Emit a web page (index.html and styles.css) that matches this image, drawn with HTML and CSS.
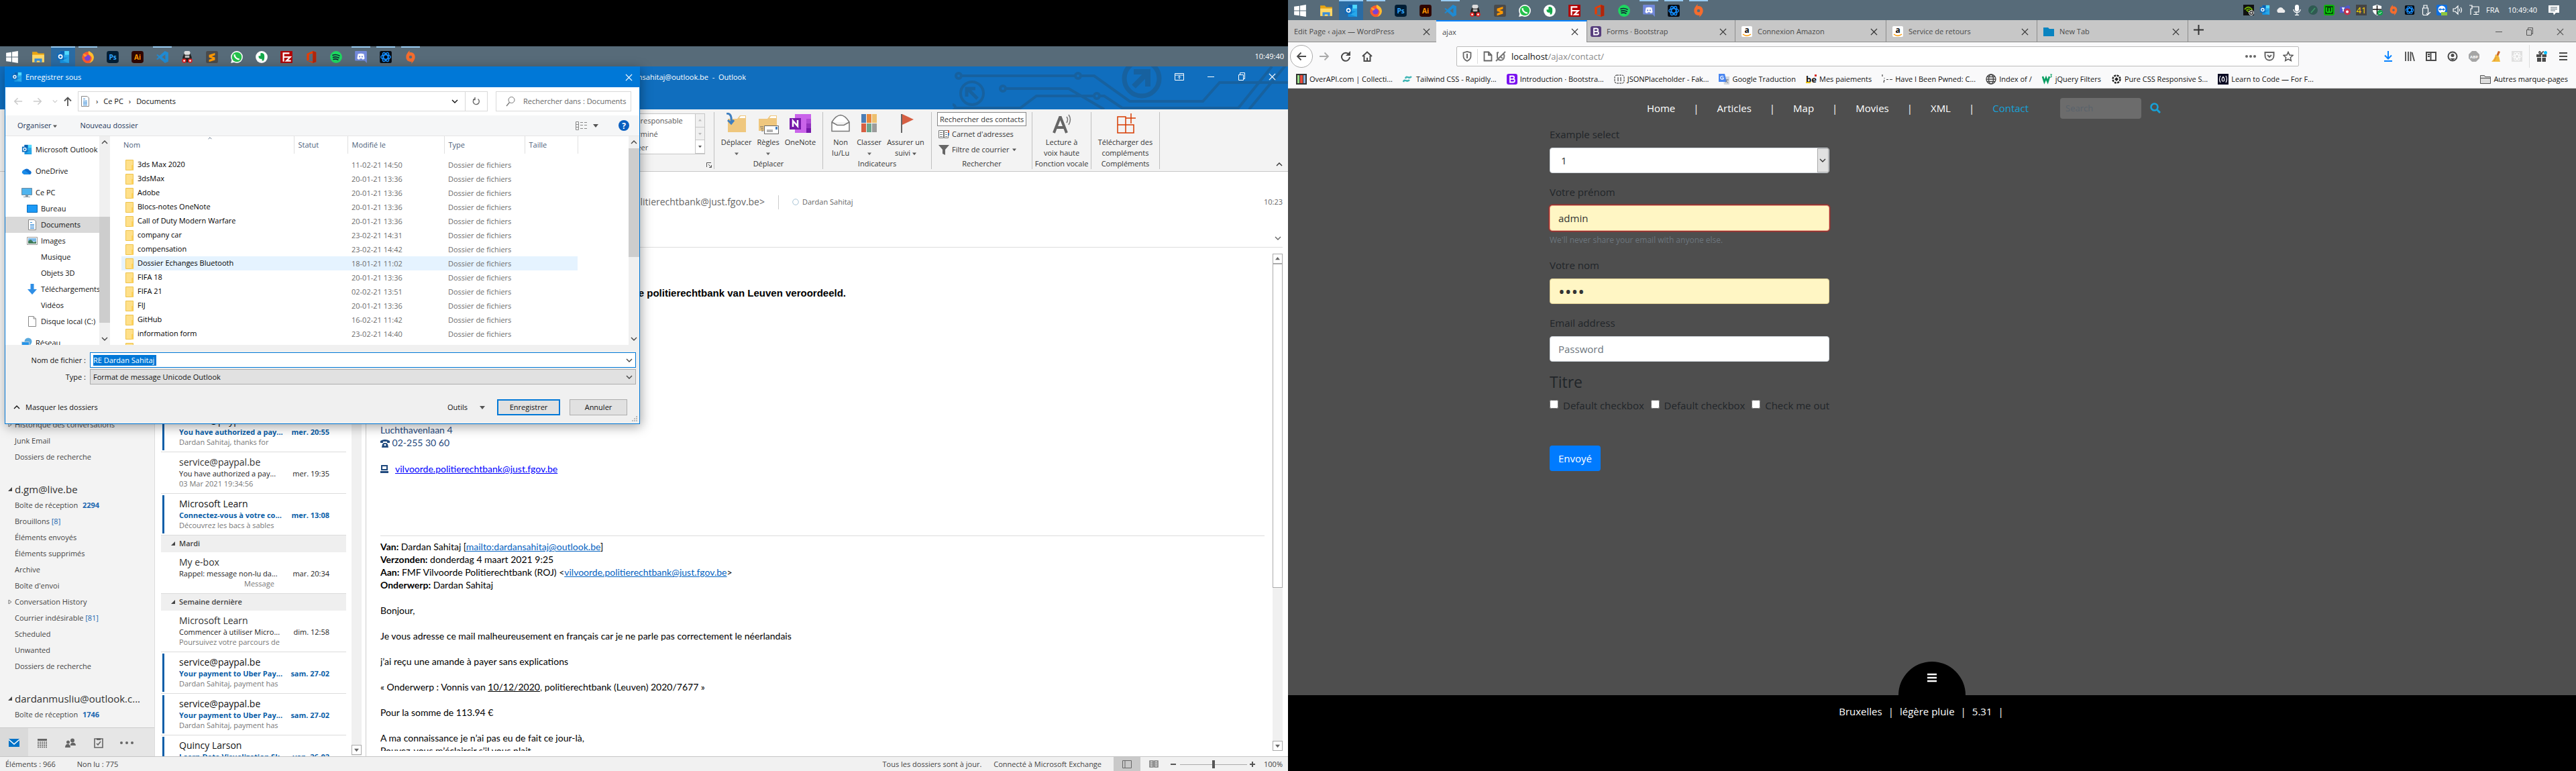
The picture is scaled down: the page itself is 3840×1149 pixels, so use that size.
FILE: index.html
```
<!DOCTYPE html>
<html lang="fr">
<head>
<meta charset="utf-8">
<title>Bureau</title>
<link rel="stylesheet" href="styles.css">
</head>
<body>
<svg class="sprite" aria-hidden="true">
  <defs>
    <symbol id="i-win" viewBox="0 0 18 18"><path fill="#fff" d="M1 3.400 8 2.400V8.500H1zM9 2.200 17 1V8.500H9zM1 9.500H8V15.600L1 14.600zM9 9.500H17V17L9 15.800z"/></symbol>
    <symbol id="i-explorer" viewBox="0 0 18 18"><path fill="#e9a512" d="M1 2h6l2 2h8v12H1z"/><path fill="#ffd868" d="M1 6h16v10H1z"/><path fill="#3b8ed8" d="M4 16v-5h10v5h-3v-2H7v2z"/></symbol>
    <symbol id="i-outlook" viewBox="0 0 18 18"><path fill="#28a8ea" d="M5 1h12v9H5z"/><path fill="#0a5eb0" d="M5 1h6v5H5z"/><path fill="#50d9ff" d="M11 1h6v5h-6z"/><path fill="#1490df" d="M5 9l12 1v7H5z"/><path fill="#28a8ea" d="M17 9v8L8 14z"/><path fill="#0f6cbd" d="M1 4h9v9H1z"/><circle cx="5.500" cy="8.500" r="2.300" fill="none" stroke="#fff" stroke-width="1.500"/></symbol>
    <symbol id="i-firefox" viewBox="0 0 18 18"><circle cx="9" cy="9.500" r="7.800" fill="#ff5a2c"/><path fill="#ffbd2e" d="M10 1c4 2 7 4 7 9a8 8 0 0 1-6 7c4-4 4-8 1-10-2-1-3-3-2-6z"/><circle cx="8.500" cy="10" r="4" fill="#7a43d6"/><path fill="#ff9a2b" d="M2 5c2 0 4 0 6 2L5 9z"/></symbol>
    <symbol id="i-ps" viewBox="0 0 18 18"><rect x="1" y="1" width="16" height="16" rx="3" fill="#001d34"/><text x="9" y="12.500" font-size="9" font-weight="700" text-anchor="middle" fill="#31a8ff">Ps</text></symbol>
    <symbol id="i-ai" viewBox="0 0 18 18"><rect x="1" y="1" width="16" height="16" rx="3" fill="#2e0500"/><text x="9" y="12.500" font-size="9" font-weight="700" text-anchor="middle" fill="#ff9a00">Ai</text></symbol>
    <symbol id="i-code" viewBox="0 0 18 18"><path fill="#1f8ad2" d="M12.500 1 17 3v12l-4.500 2L5 10.500 2.500 12.500 1 11.600 4 9 1 6.400l1.500-.9L5 7.500zM13 5.500 8.500 9 13 12.500z"/></symbol>
    <symbol id="i-robot" viewBox="0 0 18 18"><path fill="#222" d="M5 4h8l2 5v7H3V9z"/><rect x="5" y="1" width="8" height="5" rx="2" fill="#ddd"/><path fill="#bbb" d="M6 7h6v3H6z"/><circle cx="5" cy="14" r="3" fill="#d22"/><circle cx="5" cy="14" r="1.200" fill="#fff"/><circle cx="13" cy="14" r="3" fill="#d22"/><circle cx="13" cy="14" r="1.200" fill="#fff"/></symbol>
    <symbol id="i-sublime" viewBox="0 0 18 18"><rect x="1" y="1" width="16" height="16" rx="2" fill="#4a4a4a"/><path fill="#ff9800" d="M13 3.500v3L8.500 8l4.500 1.500v3.500l-8 2.500v-3L9.500 11 5 9.500V6z"/></symbol>
    <symbol id="i-whatsapp" viewBox="0 0 18 18"><circle cx="9" cy="9" r="8" fill="#fff"/><path fill="#fff" d="M1 17l1.500-5L6 16z"/><circle cx="9" cy="9" r="6.600" fill="#25c04b"/><path fill="none" stroke="#fff" stroke-width="2" d="M6 5.500c-.6 3 2.500 6.600 6.500 6.500"/></symbol>
    <symbol id="i-evernote" viewBox="0 0 18 18"><circle cx="9" cy="9" r="8" fill="#fff"/><path fill="#14a84a" d="M7.500 4c2-.8 4.500 0 5 2 .6 3 .3 6-1 8H9.500v-2.500C7 12 4.500 11 5 7.500h2.500z"/></symbol>
    <symbol id="i-filezilla" viewBox="0 0 18 18"><path fill="#b30000" d="M1 1h16v16H1z"/><path fill="none" stroke="#fff" stroke-width="2" d="M5 15V4h8M5 9h5M9 9h5l-5 5h6"/></symbol>
    <symbol id="i-office" viewBox="0 0 18 18"><path fill="#eb3c00" d="M3 4.500 11 1l4.500 1.500v13L11 17l-8-3 8 1V4L6 5.500V13l-3 1z"/><path fill="#b0260c" d="M11 1l4.500 1.500v13L11 17z"/></symbol>
    <symbol id="i-spotify" viewBox="0 0 18 18"><circle cx="9" cy="9" r="8" fill="#1ed760"/><path fill="none" stroke="#123" stroke-width="1.500" stroke-linecap="round" d="M4.500 6.500c3-1 6.500-.6 9 .8M5 9.300c2.700-.8 5.600-.4 7.700.8M5.500 12c2.200-.6 4.400-.3 6 .6"/></symbol>
    <symbol id="i-discord" viewBox="0 0 18 18"><path fill="#7289da" d="M2 1h14a1 1 0 0 1 1 1v15l-3-3H2a1 1 0 0 1-1-1V2a1 1 0 0 1 1-1z"/><path fill="#fff" d="M5 5c3-1 5-1 8 0l1 6-2.500 1.500-1-1.500h-3l-1 1.500L4 11z"/><circle cx="7.300" cy="8.500" r="1" fill="#7289da"/><circle cx="10.700" cy="8.500" r="1" fill="#7289da"/></symbol>
    <symbol id="i-battle" viewBox="0 0 18 18"><rect x="1" y="1" width="16" height="16" rx="2" fill="#050a12"/><g fill="none" stroke="#148eff" stroke-width="1.300"><ellipse cx="9" cy="9" rx="6.500" ry="3"/><ellipse cx="9" cy="9" rx="6.500" ry="3" transform="rotate(60 9 9)"/><ellipse cx="9" cy="9" rx="6.500" ry="3" transform="rotate(120 9 9)"/></g></symbol>
    <symbol id="i-origin" viewBox="0 0 18 18"><path fill="#f56c2d" d="M8 0 7.500 3C12 2 15 5 15 9c0 4-3 7-5 9l.5-3C6 16 3 13 3 9c0-4 3-7 5-9z"/><circle cx="9" cy="9" r="2" fill="#576b79"/></symbol>
    <symbol id="i-x" viewBox="0 0 12 12"><path fill="none" stroke="currentColor" stroke-width="1.400" d="M1 1l10 10M11 1 1 11"/></symbol>
    <symbol id="i-down" viewBox="0 0 10 10"><path fill="none" stroke="currentColor" stroke-width="1.400" d="M1 3l4 4 4-4"/></symbol>
    <symbol id="i-up" viewBox="0 0 10 10"><path fill="none" stroke="currentColor" stroke-width="1.400" d="M1 7l4-4 4 4"/></symbol>
    <symbol id="i-tri" viewBox="0 0 8 8"><path fill="currentColor" d="M0 2h8L4 7z"/></symbol>
    <symbol id="i-triup" viewBox="0 0 8 8"><path fill="currentColor" d="M0 6h8L4 1z"/></symbol>
    <symbol id="i-open" viewBox="0 0 8 8"><path fill="#444" d="M7 1v6H1z"/></symbol>
    <symbol id="i-doc" viewBox="0 0 16 16"><path fill="#fff" stroke="#888" d="M2.500.5H11l2.500 2.500v12.500h-11z"/><path stroke="#3b8ed8" d="M5 4.500h3M5 7.500h6M5 9.500h6M5 11.500h6M5 13.500h6"/></symbol>
    <symbol id="i-folder" viewBox="0 0 16 16"><path fill="#ffe08a" stroke="#eec34a" d="M2.500.5h11v15h-11z"/><path fill="#ffd25c" d="M11 8h2v8h-2z"/></symbol>
    <symbol id="i-cloud" viewBox="0 0 16 16"><path fill="#0f6fd0" d="M4 13a4 4 0 0 1 0-7 5 5 0 0 1 8 1 3.200 3.200 0 0 1 1 6z"/><path fill="#1b8ce8" d="M1 11a4 4 0 0 1 3-5l9 7H4z"/></symbol>
    <symbol id="i-pc" viewBox="0 0 16 16"><path fill="#4fb4ee" stroke="#6e8ba0" d="M.5 1.500h15v10H.5z"/><path fill="#8a98a3" d="M6 12h4v2h3v1H3v-1h3z"/></symbol>
    <symbol id="i-desk" viewBox="0 0 16 16"><path fill="#1b9af7" stroke="#0a6bb8" d="M.5 2.500h15v11H.5z"/></symbol>
    <symbol id="i-image" viewBox="0 0 16 16"><path fill="#fff" stroke="#999" d="M.5 2.500h15v11H.5z"/><path fill="#7db9e8" d="M2 4h12v5H2z"/><path fill="#3f7a5a" d="M2 12V8l4-2 4 4 4-1v3z"/></symbol>
    <symbol id="i-arrow" viewBox="0 0 16 16"><path fill="#2f8fe6" d="M5.500 0h5v8H15l-7 8-7-8h4.500z"/></symbol>
    <symbol id="i-page" viewBox="0 0 16 16"><path fill="#fff" stroke="#888" d="M2.500.5H10l3.500 3.500v11.500h-11z"/><path fill="none" stroke="#888" d="M10 .5V4h3.500"/></symbol>
    <symbol id="i-net" viewBox="0 0 16 16"><circle cx="10" cy="6" r="5.500" fill="#5aa9dd"/><path fill="#2694e8" stroke="#bcd" d="M.5 6.500h11v8H.5z"/></symbol>
    <symbol id="i-glass" viewBox="0 0 16 16"><circle cx="9.500" cy="6" r="4.500" fill="none" stroke="currentColor"/><path stroke="currentColor" stroke-width="1.300" d="M6.500 9.500 2 15"/></symbol>
    <symbol id="i-back" viewBox="0 0 16 16"><path fill="none" stroke="currentColor" stroke-width="1.800" d="M15 8H2M7.500 2.500 2 8l5.500 5.500"/></symbol>
    <symbol id="i-fwd" viewBox="0 0 16 16"><path fill="none" stroke="currentColor" stroke-width="1.800" d="M1 8h13M8.500 2.500 14 8l-5.500 5.500"/></symbol>
    <symbol id="i-reload" viewBox="0 0 16 16"><path fill="none" stroke="currentColor" stroke-width="2" d="M13 5.500A6 6 0 1 0 14 9"/><path fill="currentColor" d="M15 0v7H8z"/></symbol>
    <symbol id="i-min" viewBox="0 0 12 12"><path stroke="currentColor" d="M1 6.500h10"/></symbol>
    <symbol id="i-max" viewBox="0 0 12 12"><path fill="none" stroke="currentColor" d="M1.500 3.500h7v8h-7zM3.500 3V.5h7v9H9"/></symbol>
    <symbol id="i-bs" viewBox="0 0 16 16"><rect width="16" height="16" rx="3" fill="currentColor"/><path fill="none" stroke="#fff" stroke-width="1.800" d="M5 3.500h4a2 2 0 0 1 0 4.300H5zM5 7.800h4.500a2.300 2.300 0 0 1 0 4.700H5z"/></symbol>
    <symbol id="i-amazon" viewBox="0 0 16 16"><rect width="16" height="16" rx="2" fill="#fff"/><text x="8" y="10" font-size="12" font-weight="700" text-anchor="middle" fill="#111">a</text><path fill="none" stroke="#ff9900" stroke-width="1.500" d="M2 12c4 3 8 3 12 0"/></symbol>
  </defs>
</svg>

<div class="desktop">
<section class="screen screen-left">
  <header class="taskbar">
    <svg class="app first"><use href="#i-win"/></svg>
    <svg class="app"><use href="#i-explorer"/></svg>
    <svg class="app running active"><use href="#i-outlook"/></svg>
    <svg class="app running"><use href="#i-firefox"/></svg>
    <svg class="app"><use href="#i-ps"/></svg>
    <svg class="app"><use href="#i-ai"/></svg>
    <svg class="app running"><use href="#i-code"/></svg>
    <svg class="app"><use href="#i-robot"/></svg>
    <svg class="app"><use href="#i-sublime"/></svg>
    <svg class="app"><use href="#i-whatsapp"/></svg>
    <svg class="app"><use href="#i-evernote"/></svg>
    <svg class="app"><use href="#i-filezilla"/></svg>
    <svg class="app"><use href="#i-office"/></svg>
    <svg class="app"><use href="#i-spotify"/></svg>
    <svg class="app running"><use href="#i-discord"/></svg>
    <svg class="app running"><use href="#i-battle"/></svg>
    <svg class="app running"><use href="#i-origin"/></svg>
    <time class="clock end">10:49:40</time>
  </header>

  <div class="outlook">
    <header class="ol-title">
      <svg class="circuit" viewBox="0 0 500 64"><g fill="none" stroke="#17619f" stroke-width="4"><circle cx="9" cy="14" r="4"/><path d="M14 14h168"/><circle cx="187" cy="14" r="4"/><path d="M192 14h19l53 38h109l25-28h102"/><circle cx="75" cy="33" r="4"/><path d="M80 33h93l53 31"/><circle cx="0" cy="61" r="4"/><path d="M4 62h97l24-18h85"/><circle cx="215" cy="44" r="4"/><path d="M220 44h6l27 18h173l50-62M442 64l58-70"/><circle cx="29" cy="40" r="17"/><path stroke-width="5" d="M37 48 23 34M21 45V33h13"/><circle cx="282" cy="18" r="26" stroke-width="7"/><path stroke-width="8" d="M270 30l20-20M270 8h21v22"/></g></svg>
      <span class="ol-name">dardansahitaj@outlook.be&nbsp; - &nbsp;Outlook</span>
      <span class="win-ctl">
        <svg width="14" height="12" viewBox="0 0 14 12"><path fill="none" stroke="#fff" d="M.5 1.500h13v10H.5zM1 4h12M7 10V5.500M5 7.500l2-2 2 2"/></svg>
        <svg width="12" height="12"><use href="#i-min"/></svg>
        <svg width="12" height="12"><use href="#i-max"/></svg>
        <svg width="11" height="11"><use href="#i-x"/></svg>
      </span>
    </header>

    <div class="ribbon">
      <div class="rg gallery">
        <div class="gal-box">
          <div class="gal-list"><span>Au responsable</span><span>Terminé</span><span>Créer</span></div>
          <div class="gal-btns"><svg><use href="#i-triup"/></svg><svg><use href="#i-tri"/></svg><svg class="on"><use href="#i-tri"/></svg></div>
        </div>
        <svg class="launch" width="8" height="8" viewBox="0 0 8 8"><path fill="none" stroke="#555" d="M.5 7V.5H7M3 3l4 4M7.500 4v3.500H4"/></svg>
      </div>
      <div class="rg">
        <div class="rg-items">
          <button class="rb"><svg width="32" height="32" viewBox="0 0 32 32"><path fill="#efc77e" d="M3 9h14l4-5h9v25H3z"/><path fill="#fff" d="M20 8l2-3h7v3z"/><path fill="none" stroke="#3f7fc0" stroke-width="3" d="M1 1c6 0 8 4 7 14M3 11l5 5 4-5"/></svg><span>Déplacer</span><svg class="tri"><use href="#i-tri"/></svg></button>
          <button class="rb"><svg width="32" height="32" viewBox="0 0 32 32"><path fill="#efc77e" d="M2 9h13l4-5h10v23H2z"/><path fill="#fff" d="M18 8l2-3h8v3z"/><path fill="#fff" stroke="#666" d="M10.500 19.500h21v12h-21z"/><path stroke="#666" d="M4 21h5M5 24h4M6 27h3M14 26h9M14 28h9"/><path fill="#3f7fc0" d="M27 21h3v4h-3z"/></svg><span>Règles</span><svg class="tri"><use href="#i-tri"/></svg></button>
          <button class="rb"><svg width="32" height="32" viewBox="0 0 32 32"><path fill="#ca64ea" d="M8 2h24v28H8z"/><path fill="#ae4bd5" d="M25 9h7v7h-7z"/><path fill="#9332bf" d="M25 16h7v7h-7z"/><path fill="#7719aa" d="M25 23h7v7h-7zM0 8h17v17H0z"/><path fill="none" stroke="#fff" stroke-width="2.500" d="M5 21v-9l7 8v-9"/></svg><span>OneNote</span></button>
        </div>
        <div class="rg-label">Déplacer</div>
      </div>
      <div class="rg">
        <div class="rg-items">
          <button class="rb"><svg width="32" height="32" viewBox="0 0 32 32"><path fill="#fff" stroke="#777" stroke-width="1.500" d="M3 14Q9 4 16 3.500 23 4 29 14v13.500H3zM3 14l8 4.500h10l8-4.500"/></svg><span>Non<br>lu/Lu</span></button>
          <button class="rb"><svg width="32" height="32" viewBox="0 0 32 32"><path fill="#4b7db5" d="M4 2h7v13H4z"/><path fill="#e8873c" d="M12 2h7v13h-7z"/><path fill="#edc06f" d="M20 2h7v13h-7z"/><path fill="#d65f43" d="M4 16h7v13H4z"/><path fill="#6da58d" d="M12 16h7v13h-7z"/><path fill="#9c9c9c" d="M20 16h7v13h-7z"/></svg><span>Classer</span><svg class="tri"><use href="#i-tri"/></svg></button>
          <button class="rb"><svg width="32" height="32" viewBox="0 0 32 32"><path fill="#d65f43" d="M11 2l17 8-17 8z"/><path stroke="#666" stroke-width="2" d="M10 2v28"/></svg><span>Assurer un<br>suivi <svg class="tri-in"><use href="#i-tri"/></svg></span></button>
        </div>
        <div class="rg-label">Indicateurs</div>
      </div>
      <div class="rg find">
        <input class="find-in" type="text" value="Rechercher des contacts" aria-label="Rechercher des contacts">
        <button class="find-row"><svg width="16" height="16" viewBox="0 0 16 16"><path fill="#fff" stroke="#777" d="M.5 2.500h7v11h-7zM8.500 2.500h6v11h-6z"/><path stroke="#777" d="M2 5.500h4M2 8.500h4M2 11.500h4M10 5.500h3M10 8.500h3M10 11.500h3"/><path stroke="#d65f43" stroke-width="2" d="M15 2v4"/><path stroke="#3f7fc0" stroke-width="2" d="M15 6v4"/></svg>Carnet d'adresses</button>
        <button class="find-row"><svg width="16" height="16" viewBox="0 0 16 16"><path fill="#666" d="M0 1h16l-6 7v8l-4-2V8z"/></svg>Filtre de courrier <svg class="tri-in"><use href="#i-tri"/></svg></button>
        <div class="rg-label">Rechercher</div>
      </div>
      <div class="rg">
        <div class="rg-items one"><button class="rb"><svg width="32" height="32" viewBox="0 0 32 32"><path fill="none" stroke="#666" stroke-width="4" d="M4 30 13 7h1l9 23M8 22h12"/><path fill="none" stroke="#777" stroke-width="1.500" d="M23 6q3 4 0 9M26 3q5 7 0 15"/></svg><span>Lecture à<br>voix haute</span></button></div>
        <div class="rg-label">Fonction vocale</div>
      </div>
      <div class="rg">
        <div class="rg-items one"><button class="rb"><svg width="32" height="32" viewBox="0 0 32 32"><path fill="none" stroke="#d83b01" stroke-width="1.500" d="M4 6h12v24H4zM4 18h24v12H4M16 18v12M24 1v15M16 8h15"/></svg><span>Télécharger des<br>compléments</span></button></div>
        <div class="rg-label">Compléments</div>
      </div>
      <svg class="collapse" width="10" height="10"><use href="#i-up"/></svg>
    </div>

    <div class="ol-body">
      <nav class="folders">
        <ul class="tree-list">
          <li><svg class="tw" viewBox="0 0 8 8"><path fill="none" stroke="#777" d="M2 1l4 3-4 3z"/></svg>Historique des conversations</li>
          <li>Junk Email</li>
          <li>Dossiers de recherche</li>
          <li class="acct"><svg class="tw"><use href="#i-open"/></svg>d.gm@live.be</li>
          <li>Boîte de réception <b>2294</b></li>
          <li>Brouillons <i>[8]</i></li>
          <li>Éléments envoyés</li>
          <li>Éléments supprimés</li>
          <li>Archive</li>
          <li>Boîte d'envoi</li>
          <li><svg class="tw" viewBox="0 0 8 8"><path fill="none" stroke="#777" d="M2 1l4 3-4 3z"/></svg>Conversation History</li>
          <li>Courrier indésirable <i>[81]</i></li>
          <li>Scheduled</li>
          <li>Unwanted</li>
          <li>Dossiers de recherche</li>
          <li class="acct"><svg class="tw"><use href="#i-open"/></svg>dardanmusliu@outlook.c...</li>
          <li>Boîte de réception <b>1746</b></li>
        </ul>
        <div class="modules">
          <button aria-label="Courrier"><svg width="16" height="16" viewBox="0 0 16 16"><path fill="#0072c6" d="M0 2h16v12H0z"/><path fill="none" stroke="#fff" stroke-width="1.500" d="M0 3l8 7 8-7"/></svg></button>
          <button aria-label="Calendrier"><svg width="16" height="16" viewBox="0 0 16 16"><path fill="#666" d="M1 2h14v3H1z"/><path stroke="#666" stroke-width="1.500" stroke-dasharray="2 1" d="M1 7h14M1 9.500h14M1 12h14M1 14.500h14"/></svg></button>
          <button aria-label="Contacts"><svg width="16" height="16" viewBox="0 0 16 16"><g fill="#666"><circle cx="4.500" cy="7" r="2.500"/><circle cx="11" cy="4.500" r="3"/><path d="M0 15c0-7 8-7 8 0zM8 12c-1-5 8-6 8 0z"/></g></svg></button>
          <button aria-label="Tâches"><svg width="16" height="16" viewBox="0 0 16 16"><path fill="none" stroke="#666" stroke-width="1.600" d="M5 2H2v13h12V2h-3M5 9l2 2 4-5"/><path fill="#666" d="M5 1h6v3H5z"/></svg></button>
          <button aria-label="Plus"><svg width="20" height="16" viewBox="0 0 20 16"><g fill="#666"><circle cx="2" cy="8" r="2"/><circle cx="10" cy="8" r="2"/><circle cx="18" cy="8" r="2"/></g></svg></button>
        </div>
      </nav>

      <div class="mail-col">
        <div class="mails">
          <article class="mail unread"><h3>service@paypal.be</h3><p class="subj"><span>You have authorized a pay...</span><span>mer. 20:55</span></p><p class="prev">Dardan Sahitaj, thanks for</p></article>
          <article class="mail"><h3>service@paypal.be</h3><p class="subj"><span>You have authorized a pay...</span><span>mer. 19:35</span></p><p class="prev">03 Mar 2021 19:34:56</p></article>
          <article class="mail unread"><h3>Microsoft Learn</h3><p class="subj"><span>Connectez-vous à votre co...</span><span>mer. 13:08</span></p><p class="prev">Découvrez les bacs à sables</p></article>
          <h2 class="day"><svg width="8" height="8"><use href="#i-open"/></svg>Mardi</h2>
          <article class="mail"><h3>My e-box</h3><p class="subj"><span>Rappel: message non-lu da...</span><span>mar. 20:34</span></p><p class="prev indent">Message</p></article>
          <h2 class="day"><svg width="8" height="8"><use href="#i-open"/></svg>Semaine dernière</h2>
          <article class="mail"><h3>Microsoft Learn</h3><p class="subj"><span>Commencer à utiliser Micro...</span><span>dim. 12:58</span></p><p class="prev">Poursuivez votre parcours de</p></article>
          <article class="mail unread"><h3>service@paypal.be</h3><p class="subj"><span>Your payment to Uber Pay...</span><span>sam. 27-02</span></p><p class="prev">Dardan Sahitaj, payment has</p></article>
          <article class="mail unread"><h3>service@paypal.be</h3><p class="subj"><span>Your payment to Uber Pay...</span><span>sam. 27-02</span></p><p class="prev">Dardan Sahitaj, payment has</p></article>
          <article class="mail unread"><h3>Quincy Larson</h3><p class="subj"><span>Learn Data Visualization Sk...</span><span>ven. 26-02</span></p></article>
        </div>
        <div class="sb light"><svg class="sb-btn"><use href="#i-tri"/></svg></div>
      </div>

      <main class="reading">
        <header class="read-head">
          <span class="from">politierechtbank@just.fgov.be&gt;</span>
          <span class="to"><svg width="10" height="10" viewBox="0 0 10 10"><circle cx="5" cy="5" r="4.300" fill="none" stroke="#a8c4d6"/></svg>Dardan Sahitaj</span>
          <time>10:23</time>
          <svg class="more" width="10" height="10"><use href="#i-down"/></svg>
        </header>
        <div class="read-body">
          <div class="msg">
            <p class="verdict">de politierechtbank van Leuven veroordeeld.</p>
            <div class="sig">
              <p>Luchthavenlaan 4</p>
              <p><svg width="14" height="12" viewBox="0 0 14 12"><path fill="#1f497d" d="M0 5V2q7-4 14 0v3h-4V3H4v2zM2 12l1-5 2-2h4l2 2 1 5z"/><circle cx="7" cy="8" r="1.500" fill="#fff"/></svg> 02-255 30 60</p>
              <p class="sig-mail"><svg width="12" height="12" viewBox="0 0 12 12"><path fill="#1f497d" d="M1 0h10v8H1zM0 9h12v3H0z"/><path fill="#fff" d="M3 2h6v4H3z"/></svg><a href="#mail">vilvoorde.politierechtbank@just.fgov.be</a></p>
            </div>
            <div class="quote">
              <p><b>Van:</b> Dardan Sahitaj [<a href="#mail">mailto:dardansahitaj@outlook.be</a>]</p>
              <p><b>Verzonden:</b> donderdag 4 maart 2021 9:25</p>
              <p><b>Aan:</b> FMF Vilvoorde Politierechtbank (ROJ) &lt;<a href="#mail">vilvoorde.politierechtbank@just.fgov.be</a>&gt;</p>
              <p class="gap"><b>Onderwerp:</b> Dardan Sahitaj</p>
              <p class="gap">Bonjour,</p>
              <p class="gap">Je vous adresse ce mail malheureusement en français car je ne parle pas correctement le néerlandais</p>
              <p class="gap">j’ai reçu une amande à payer sans explications</p>
              <p class="gap">« Onderwerp : Vonnis van <u>10/12/2020</u>, politierechtbank (Leuven) 2020/7677 »</p>
              <p class="gap">Pour la somme de 113.94 €</p>
              <p>A ma connaissance je n’ai pas eu de fait ce jour-là,</p>
              <p>Pouvez-vous m’éclaircir s’il vous plait</p>
            </div>
          </div>
          <div class="sb light read-sb"><svg class="sb-btn"><use href="#i-triup"/></svg><div class="thumb"></div><svg class="sb-btn"><use href="#i-tri"/></svg></div>
        </div>
      </main>
    </div>

    <footer class="status">
      <span>Éléments : 966</span><span>Non lu : 775</span>
      <span class="end">Tous les dossiers sont à jour.</span><span>Connecté à Microsoft Exchange</span>
      <div class="zoombar">
        <span class="view on"><svg width="14" height="12" viewBox="0 0 14 12"><path fill="none" stroke="#666" d="M.5.5h13v11H.5zM4 1v10"/></svg></span>
        <span class="view"><svg width="14" height="12" viewBox="0 0 14 12"><path fill="none" stroke="#777" stroke-width="1.500" d="M1 1h5v9H1zM8 1h5v9H8zM2 4h4M2 7h4M9 4h3M9 7h3"/></svg></span>
        <svg width="126" height="12" viewBox="0 0 126 12"><path stroke="#555" stroke-width="2" d="M0 6h8M118 6h8M122 2v8"/><path stroke="#aaa" stroke-width="1" d="M14 6.500h100"/><path fill="#555" d="M62 0h4v12h-4z"/></svg>
        <span>100%</span>
      </div>
    </footer>

    <form class="dialog">
      <header class="dl-title"><svg width="16" height="16"><use href="#i-outlook"/></svg>Enregistrer sous<svg class="end" width="11" height="11"><use href="#i-x"/></svg></header>
      <div class="dl-nav">
        <svg class="dim" width="14" height="14"><use href="#i-back"/></svg>
        <svg class="dim" width="14" height="14"><use href="#i-fwd"/></svg>
        <svg class="dim" width="8" height="8"><use href="#i-down"/></svg>
        <svg width="14" height="14" viewBox="0 0 14 14"><path fill="none" stroke="#555" stroke-width="1.800" d="M7 14V2M2 6.500 7 1.500l5 5"/></svg>
        <div class="path"><svg width="16" height="16"><use href="#i-doc"/></svg><span class="chev">›</span><span>Ce PC</span><span class="chev">›</span><span>Documents</span><svg class="end" width="10" height="10"><use href="#i-down"/></svg><span class="refresh"><svg width="12" height="12" viewBox="0 0 12 12"><path fill="none" stroke="#666" stroke-width="1.400" d="M4 2a4.500 4.500 0 1 0 4.500.5M4 0v3.500H1"/></svg></span></div>
        <label class="dl-search"><svg width="16" height="16"><use href="#i-glass"/></svg><input type="text" placeholder="Rechercher dans : Documents" aria-label="Rechercher"></label>
      </div>
      <div class="dl-tools"><span>Organiser <svg class="tri-in"><use href="#i-tri"/></svg></span><span>Nouveau dossier</span>
        <svg class="end" width="18" height="13" viewBox="0 0 18 13"><path fill="none" stroke="#888" d="M.5.5h4v12h-4zM.5 4.500h4M.5 8.500h4M7 1.500h4M7 5.500h4M7 10.500h4M13 1.500h4M13 5.500h4M13 10.500h4"/></svg>
        <svg class="tri-in"><use href="#i-tri"/></svg>
        <svg class="help" width="16" height="16" viewBox="0 0 16 16"><circle cx="8" cy="8" r="8" fill="#0a5fc0"/><text x="8" y="12.500" font-size="12" font-weight="700" text-anchor="middle" fill="#fff">?</text></svg>
      </div>
      <div class="dl-main">
        <ul class="places">
          <li class="top"><svg><use href="#i-outlook"/></svg>Microsoft Outlook</li>
          <li class="top"><svg><use href="#i-cloud"/></svg>OneDrive</li>
          <li class="top"><svg><use href="#i-pc"/></svg>Ce PC</li>
          <li><svg><use href="#i-desk"/></svg>Bureau</li>
          <li class="sel"><svg><use href="#i-doc"/></svg>Documents</li>
          <li><svg><use href="#i-image"/></svg>Images</li>
          <li><svg></svg>Musique</li>
          <li><svg></svg>Objets 3D</li>
          <li><svg><use href="#i-arrow"/></svg>Téléchargements</li>
          <li><svg></svg>Vidéos</li>
          <li><svg><use href="#i-page"/></svg>Disque local (C:)</li>
          <li class="top"><svg><use href="#i-net"/></svg>Réseau</li>
        </ul>
        <div class="sb tree-sb"><svg><use href="#i-up"/></svg><div class="thumb"></div><svg><use href="#i-down"/></svg></div>
        <div class="files">
          <table>
            <colgroup><col class="c1"><col class="c2"><col class="c3"><col class="c4"><col class="c5"></colgroup>
            <thead><tr><th>Nom<svg class="sort"><use href="#i-up"/></svg></th><th>Statut</th><th>Modifié le</th><th>Type</th><th>Taille</th></tr></thead>
            <tbody>
              <tr><td><svg><use href="#i-folder"/></svg>3ds Max 2020</td><td></td><td>11-02-21 14:50</td><td>Dossier de fichiers</td><td></td></tr>
              <tr><td><svg><use href="#i-folder"/></svg>3dsMax</td><td></td><td>20-01-21 13:36</td><td>Dossier de fichiers</td><td></td></tr>
              <tr><td><svg><use href="#i-folder"/></svg>Adobe</td><td></td><td>20-01-21 13:36</td><td>Dossier de fichiers</td><td></td></tr>
              <tr><td><svg><use href="#i-folder"/></svg>Blocs-notes OneNote</td><td></td><td>20-01-21 13:36</td><td>Dossier de fichiers</td><td></td></tr>
              <tr><td><svg><use href="#i-folder"/></svg>Call of Duty Modern Warfare</td><td></td><td>20-01-21 13:36</td><td>Dossier de fichiers</td><td></td></tr>
              <tr><td><svg><use href="#i-folder"/></svg>company car</td><td></td><td>23-02-21 14:31</td><td>Dossier de fichiers</td><td></td></tr>
              <tr><td><svg><use href="#i-folder"/></svg>compensation</td><td></td><td>23-02-21 14:42</td><td>Dossier de fichiers</td><td></td></tr>
              <tr class="hover"><td><svg><use href="#i-folder"/></svg>Dossier Echanges Bluetooth</td><td></td><td>18-01-21 11:02</td><td>Dossier de fichiers</td><td></td></tr>
              <tr><td><svg><use href="#i-folder"/></svg>FIFA 18</td><td></td><td>20-01-21 13:36</td><td>Dossier de fichiers</td><td></td></tr>
              <tr><td><svg><use href="#i-folder"/></svg>FIFA 21</td><td></td><td>02-02-21 13:51</td><td>Dossier de fichiers</td><td></td></tr>
              <tr><td><svg><use href="#i-folder"/></svg>FIJ</td><td></td><td>20-01-21 13:36</td><td>Dossier de fichiers</td><td></td></tr>
              <tr><td><svg><use href="#i-folder"/></svg>GitHub</td><td></td><td>16-02-21 11:42</td><td>Dossier de fichiers</td><td></td></tr>
              <tr><td><svg><use href="#i-folder"/></svg>information form</td><td></td><td>23-02-21 14:40</td><td>Dossier de fichiers</td><td></td></tr>
              <tr><td><svg><use href="#i-folder"/></svg>logo</td><td></td><td>23-02-21 14:41</td><td>Dossier de fichiers</td><td></td></tr>
            </tbody>
          </table>
        </div>
        <div class="sb file-sb"><svg><use href="#i-up"/></svg><div class="thumb"></div><svg><use href="#i-down"/></svg></div>
      </div>
      <div class="dl-fields">
        <label for="fname">Nom de fichier :</label>
        <div class="combo focus"><input id="fname" type="text" value="RE Dardan Sahitaj"><svg width="10" height="10"><use href="#i-down"/></svg></div>
        <label for="ftype">Type :</label>
        <div class="combo"><select id="ftype"><option>Format de message Unicode Outlook</option></select><svg width="10" height="10"><use href="#i-down"/></svg></div>
      </div>
      <div class="dl-actions">
        <svg width="10" height="10"><use href="#i-up"/></svg><span>Masquer les dossiers</span>
        <span class="end">Outils</span><svg class="tri-in"><use href="#i-tri"/></svg>
        <button type="button" class="btn primary">Enregistrer</button><button type="button" class="btn">Annuler</button>
      </div>
      <svg class="grip" viewBox="0 0 9 9"><path fill="#bbb" d="M6 0h2v2H6zM3 3h2v2H3zM6 3h2v2H6zM0 6h2v2H0zM3 6h2v2H3zM6 6h2v2H6z"/></svg>
    </form>
  </div>
</section>

<section class="screen screen-right">
  <header class="taskbar">
    <svg class="app first"><use href="#i-win"/></svg>
    <svg class="app"><use href="#i-explorer"/></svg>
    <svg class="app running active"><use href="#i-outlook"/></svg>
    <svg class="app running"><use href="#i-firefox"/></svg>
    <svg class="app"><use href="#i-ps"/></svg>
    <svg class="app"><use href="#i-ai"/></svg>
    <svg class="app running"><use href="#i-code"/></svg>
    <svg class="app"><use href="#i-robot"/></svg>
    <svg class="app"><use href="#i-sublime"/></svg>
    <svg class="app"><use href="#i-whatsapp"/></svg>
    <svg class="app"><use href="#i-evernote"/></svg>
    <svg class="app"><use href="#i-filezilla"/></svg>
    <svg class="app"><use href="#i-office"/></svg>
    <svg class="app"><use href="#i-spotify"/></svg>
    <svg class="app running"><use href="#i-discord"/></svg>
    <svg class="app running"><use href="#i-battle"/></svg>
    <svg class="app running"><use href="#i-origin"/></svg>
    <div class="tray end">
      <svg viewBox="0 0 16 16"><path fill="#111" d="M0 0h16v16H0z"/><path fill="none" stroke="#76b900" stroke-width="1.600" d="M2 7c4-5 8-4 11 0-3 4-6 4-8 1 2-2 3-2 5-1"/><circle cx="12" cy="12" r="3.500" fill="#111" stroke="#fff"/><path stroke="#fff" d="M12 10v4M10 12h4"/></svg>
      <svg><use href="#i-outlook"/></svg>
      <svg viewBox="0 0 16 16"><path fill="#ececec" d="M4 12a3.500 3.500 0 0 1 0-6 4.500 4.500 0 0 1 8 1 2.700 2.700 0 0 1 1 5z"/></svg>
      <svg viewBox="0 0 16 16"><rect x="5" y="0" width="6" height="10" rx="3" fill="#fff"/><path fill="none" stroke="#fff" stroke-width="1.300" d="M3 7c0 6 10 6 10 0M8 12v3M5 15.300h6"/></svg>
      <svg viewBox="0 0 16 16"><circle cx="8" cy="8" r="7" fill="#2f5a52"/><path stroke="#3f9968" stroke-width="1.500" d="M5 12l6-7"/></svg>
      <svg viewBox="0 0 16 16"><rect x="1" y="1" width="14" height="14" rx="2" fill="#064d06" stroke="#0bb40b" stroke-width="2"/><path fill="none" stroke="#0bd40b" stroke-width="1.800" d="M4 4v6q2 3 4 0V5v5q2 3 4 0V4"/></svg>
      <svg viewBox="0 0 16 16"><path fill="#5059c9" d="M0 3h9v9H0z"/><circle cx="12" cy="4" r="3" fill="#5059c9"/><circle cx="11" cy="10.500" r="5" fill="#c4314b"/><path stroke="#fff" stroke-width="1.600" d="M3 5h4M5 5v5"/><circle cx="11" cy="10.500" r="2" fill="#fff"/></svg>
      <b class="temp">41</b>
      <svg viewBox="0 0 16 16"><path fill="#fff" d="M7.500 0 14 2v6c0 4-3 6-6.500 8C4 14 1 12 1 8V2z"/><path stroke="#111" stroke-width="1.500" d="M7.500 1v14M1 7h13"/><circle cx="12" cy="12" r="4" fill="#10a54a"/><path fill="none" stroke="#fff" d="M10 12l1.500 1.500L14 11"/></svg>
      <svg><use href="#i-origin"/></svg>
      <svg><use href="#i-battle"/></svg>
      <svg viewBox="0 0 16 16"><path fill="none" stroke="#fff" stroke-width="1.200" d="M5 5V1h5v4M3.500 5h8v9l-1 1.500h-6l-1-1.500zM9 13l2 2 4-4"/></svg>
      <svg viewBox="0 0 16 16"><rect width="16" height="16" rx="2" fill="#0e6fe0"/><circle cx="8" cy="7" r="5.500" fill="#fff"/><path fill="#0e6fe0" d="M3 7l3-2v1.300h4V5l3 2-3 2V7.800H6V9z"/><path fill="#8dc63f" d="M7 11h9v5H7z"/></svg>
      <svg viewBox="0 0 16 16"><path fill="none" stroke="#fff" stroke-width="1.200" d="M1 6v4h3l4 4V2L4 6zM10 6q1.500 2 0 4M12 4q3 4 0 8"/></svg>
      <svg viewBox="0 0 16 16"><path fill="none" stroke="#fff" stroke-width="1.200" d="M4 3h11v8H8M11 11v3M7 14.500h8M1 1h4v5H3v9"/></svg>
    </div>
    <span class="lang">FRA</span>
    <time class="clock">10:49:40</time>
    <svg class="notif" viewBox="0 0 16 16"><path fill="#fff" d="M0 1h16v11h-5l-3 3.500L7 12H0z"/><path stroke="#576b79" stroke-width="1.200" d="M3 4h10M3 6.500h10M3 9h7"/></svg>
  </header>

  <div class="tabs">
    <div class="tab"><span>Edit Page ‹ ajax — WordPress</span><svg class="end"><use href="#i-x"/></svg></div>
    <div class="tab active"><span>ajax</span><svg class="end"><use href="#i-x"/></svg></div>
    <div class="tab"><svg class="fav violet"><use href="#i-bs"/></svg><span>Forms · Bootstrap</span><svg class="end"><use href="#i-x"/></svg></div>
    <div class="tab"><svg class="fav"><use href="#i-amazon"/></svg><span>Connexion Amazon</span><svg class="end"><use href="#i-x"/></svg></div>
    <div class="tab"><svg class="fav"><use href="#i-amazon"/></svg><span>Service de retours</span><svg class="end"><use href="#i-x"/></svg></div>
    <div class="tab"><svg class="fav" viewBox="0 0 16 16"><path fill="#0a84c0" d="M0 2h7l2 2h7v11H0z"/></svg><span>New Tab</span><svg class="end"><use href="#i-x"/></svg></div>
    <button class="newtab" aria-label="Nouvel onglet"><svg width="15" height="15" viewBox="0 0 15 15"><path stroke="#333" stroke-width="2" d="M7.500 0v15M0 7.500h15"/></svg></button>
    <span class="win-ctl dark"><svg width="12" height="12"><use href="#i-min"/></svg><svg width="12" height="12"><use href="#i-max"/></svg><svg width="11" height="11"><use href="#i-x"/></svg></span>
  </div>

  <div class="toolbar">
    <button class="back" aria-label="Précédent"><svg><use href="#i-back"/></svg></button>
    <svg class="dim"><use href="#i-fwd"/></svg>
    <svg><use href="#i-reload"/></svg>
    <svg viewBox="0 0 16 16"><path fill="none" stroke="#4a4a4a" stroke-width="2" d="M1 8 8 1.500 15 8M3.500 7v8h9V7M8 15v-5"/></svg>
    <label class="url">
      <svg viewBox="0 0 16 16"><path fill="none" stroke="#666" stroke-width="1.800" d="M2.500 2.500 8 1l5.500 1.500V8c0 3-2.500 5.500-5.500 7-3-1.500-5.500-4-5.500-7z"/><path fill="#666" d="M7 4h2v7H7z"/></svg>
      <i class="vsep"></i>
      <svg viewBox="0 0 16 16"><path fill="none" stroke="#666" stroke-width="1.800" d="M2.500 1.500H9L13.500 6v8.500h-11zM9 1.500V6h4.500"/></svg>
      <svg viewBox="0 0 16 16"><path fill="none" stroke="#777" stroke-width="2" d="M3 3v6c0 4 5 6 8 4s3-7 1-9M1 15 15 1M2 3l3-1M7 8l4 3"/></svg>
      <span class="addr"><b>localhost</b>/ajax/contact/</span>
      <svg class="end" viewBox="0 0 16 16"><g fill="#666"><circle cx="2" cy="8" r="2"/><circle cx="8" cy="8" r="2"/><circle cx="14" cy="8" r="2"/></g></svg>
      <svg viewBox="0 0 16 16"><path fill="none" stroke="#666" stroke-width="2" d="M1.500 2h13v5c0 9-13 9-13 0zM5 6l3 3 3-3"/></svg>
      <svg viewBox="0 0 16 16"><path fill="none" stroke="#555" stroke-width="1.500" d="M8 1.500l2 4.500 5 .5-3.700 3.300 1 4.700L8 12l-4.300 2.500 1-4.700L1 6.500 6 6z"/></svg>
    </label>
    <div class="exts">
      <svg viewBox="0 0 16 16"><path fill="none" stroke="#0a84ff" stroke-width="2" d="M8 0v11M3 6.500l5 5 5-5M2 15h12"/></svg>
      <svg viewBox="0 0 16 16"><path stroke="#4a4a4a" stroke-width="1.800" d="M2 1v14M6 1v14M9.500 1v14M11.500 2l3.500 13"/></svg>
      <svg viewBox="0 0 16 16"><path fill="none" stroke="#4a4a4a" stroke-width="2" d="M1 2h14v12H1zM7.500 2v12M3 5h3M3 8h3"/></svg>
      <svg viewBox="0 0 16 16"><circle cx="8" cy="8" r="6.500" fill="none" stroke="#4a4a4a" stroke-width="2"/><circle cx="8" cy="6.500" r="2.500" fill="#4a4a4a"/><path fill="#4a4a4a" d="M4 11h8l-4 3z"/></svg>
      <svg viewBox="0 0 16 16"><path fill="#a5a5a5" d="M5 0h6l5 5v6l-5 5H5l-5-5V5z"/><text x="8" y="11" font-size="6" font-weight="700" text-anchor="middle" fill="#fff">ABP</text></svg>
      <svg viewBox="0 0 16 16"><path fill="#c9682c" d="M12 0l3 1-3 7-3-1z"/><path fill="#f2b93b" d="M8 5l5 3c1 3 1 5 2 8H2c3-3 5-6 6-11z"/><path stroke="#d84" d="M9 9l-3 6"/></svg>
      <svg viewBox="0 0 16 16"><path fill="#e0e0e0" d="M0 0h16v16H0z"/><g fill="none" stroke="#fff"><ellipse cx="8" cy="8" rx="6.500" ry="2.500"/><ellipse cx="8" cy="8" rx="6.500" ry="2.500" transform="rotate(60 8 8)"/><ellipse cx="8" cy="8" rx="6.500" ry="2.500" transform="rotate(120 8 8)"/></g></svg>
      <i class="vsep tall"></i>
      <svg viewBox="0 0 16 16"><path fill="#4a4a4a" d="M0 5h7v4H0zM8.500 5H15v4H8.500zM1 10h6v6H1zM8.500 10h5.500v6H8.500z"/><path fill="none" stroke="#4a4a4a" stroke-width="1.500" d="M8 5Q3 4 4 1.500T8 5q0-4 3-4"/><circle cx="13.500" cy="2.500" r="2.500" fill="#0ac1ff"/></svg>
      <svg viewBox="0 0 16 16"><path stroke="#4a4a4a" stroke-width="2" d="M2 3h12M2 8h12M2 13h12"/></svg>
    </div>
  </div>

  <nav class="marks">
    <a href="#m"><svg viewBox="0 0 16 16"><path fill="#333" d="M0 0h16v16H0z"/><path fill="#9be08a" d="M2 2h3v12H2z"/><path fill="#e64b3c" d="M6 2h4v12H6z"/><path fill="#8ab4e0" d="M11 2h3v12h-3z"/></svg>OverAPI.com | Collecti...</a>
    <a href="#m"><svg viewBox="0 0 16 16"><path fill="none" stroke="#3fb5b5" stroke-width="2.500" d="M4 7c2-6 5 2 9-3M1 12c2-6 5 2 9-3"/></svg>Tailwind CSS - Rapidly...</a>
    <a href="#m"><svg class="purple"><use href="#i-bs"/></svg>Introduction · Bootstra...</a>
    <a href="#m"><svg viewBox="0 0 16 16"><rect x="1" y="2" width="14" height="12" rx="3" fill="none" stroke="#222" stroke-dasharray="3 1"/><path stroke="#222" d="M6 5v6M10 5v6"/></svg>JSONPlaceholder - Fak...</a>
    <a href="#m"><svg viewBox="0 0 16 16"><path fill="#d5d8dc" d="M6 4h10v12H8z"/><path fill="#4a86f0" d="M0 0h9l3 12H0z"/><path fill="none" stroke="#fff" stroke-width="1.200" d="M7 4a2.500 2.500 0 1 0 0 3.500V6H5"/><path stroke="#7a8594" d="M10 9h5M12.500 8v1l-2 4M11 10l3 4"/></svg>Google Traduction</a>
    <a href="#m"><svg viewBox="0 0 16 16"><text x="8" y="13" font-size="13" font-weight="700" text-anchor="middle" fill="#111">be</text><path fill="#d5281e" d="M13 1h3v3h-3z"/><path fill="#e9c400" d="M0 12h7v2H0z"/></svg>Mes paiements</a>
    <a href="#m"><svg viewBox="0 0 16 16"><path fill="none" stroke="#444" stroke-width="1.200" d="M1 1v3M4 6v1M4 9l-1 4M7 8.500h3M12 8.500h4"/></svg>Have I Been Pwned: C...</a>
    <a href="#m"><svg viewBox="0 0 16 16"><g fill="none" stroke="#444" stroke-width="1.300"><circle cx="8" cy="8" r="7"/><ellipse cx="8" cy="8" rx="3.500" ry="7"/><path d="M1 8h14M2 4.500h12M2 11.500h12"/></g></svg>Index of /</a>
    <a href="#m"><svg viewBox="0 0 16 16"><path fill="none" stroke="#0b9f63" stroke-width="2.600" d="M1 4l2.500 8L6 6l2.500 6L11 4"/><path fill="none" stroke="#0b9f63" d="M12 1h3l-2 2q2 0 1 2h-2"/></svg>jQuery Filters</a>
    <a href="#m"><svg viewBox="0 0 16 16"><path fill="#fff" d="M0 0h16v16H0z"/><circle cx="8" cy="8" r="5.500" fill="none" stroke="#222" stroke-width="2.500" stroke-dasharray="3 1.300"/><path fill="#222" d="M8 5l3 3-3 3-3-3z"/></svg>Pure CSS Responsive S...</a>
    <a href="#m"><svg viewBox="0 0 16 16"><path fill="#0a0a23" d="M0 0h16v16H0z"/><path fill="none" stroke="#fff" stroke-width="1.200" d="M4 3q-3 5 0 10M12 3q3 5 0 10M8 4q-3 4-1 7h2q2-3-1-7"/></svg>Learn to Code — For F...</a>
    <a href="#m" class="end"><svg viewBox="0 0 16 16"><path fill="#ddd" stroke="#555" d="M.5 2.500h6l1 2h8v10H.5zM.5 6.500h15"/></svg>Autres marque-pages</a>
  </nav>

  <div class="page">
    <nav class="site-nav">
      <a href="#home">Home</a><span>|</span><a href="#articles">Articles</a><span>|</span><a href="#map">Map</a><span>|</span><a href="#movies">Movies</a><span>|</span><a href="#xml">XML</a><span>|</span><a href="#contact" class="current">Contact</a>
      <input type="search" placeholder="Search" aria-label="Search">
      <button aria-label="Chercher"><svg width="16" height="16" viewBox="0 0 16 16"><circle cx="6.500" cy="6.500" r="5" fill="none" stroke="#17a2d8" stroke-width="2.600"/><path stroke="#17a2d8" stroke-width="3" d="M10 10l5 5"/></svg></button>
    </nav>
    <form class="contact">
      <label for="ex">Example select</label>
      <div class="pick"><select id="ex"><option>1</option></select><span><svg width="10" height="10"><use href="#i-down"/></svg></span></div>
      <label for="fn">Votre prénom</label>
      <input id="fn" class="filled bad" type="text" value="admin">
      <small>We'll never share your email with anyone else.</small>
      <label for="ln">Votre nom</label>
      <input id="ln" class="filled secret" type="password" value="abcd">
      <label for="em">Email address</label>
      <input id="em" type="text" placeholder="Password">
      <h4>Titre</h4>
      <div class="checks">
        <label><input type="checkbox">Default checkbox</label>
        <label><input type="checkbox">Default checkbox</label>
        <label><input type="checkbox">Check me out</label>
      </div>
      <button type="button">Envoyé</button>
    </form>
    <footer class="weather">
      <button class="dome" aria-label="Menu"><svg width="14" height="14" viewBox="0 0 14 14"><path stroke="#fff" stroke-width="2.400" d="M0 2h14M0 7h14M0 12h14"/></svg></button>
      <p><span>Bruxelles</span><span>|</span><span>légère pluie</span><span>|</span><span>5.31</span><span>|</span></p>
    </footer>
  </div>
</section>
</div>
</body>
</html>
```
FILE: styles.css
```
* { box-sizing: border-box; }
body { margin: 0; background: #000; font: 11px/16px "Open Sans", "Noto Sans", sans-serif; color: #222; }
h2, h3, h4, p, ul { margin: 0; padding: 0; font-weight: 400; }
ul { list-style: none; }
i { font-style: normal; }
button, input, select { font: inherit; color: inherit; }
button { border: 0; background: none; padding: 0; }
svg { flex: none; }
.sprite { position: absolute; width: 0; height: 0; }
.end { margin-left: auto; }
.desktop { display: grid; grid-template-columns: 1fr 1fr; height: 100vh; }
.screen { display: flex; flex-direction: column; min-width: 0; min-height: 0; overflow: hidden; }
.screen-left { padding-top: 69px; }

/* taskbar */
.taskbar { flex: none; display: flex; align-items: center; gap: 9px; height: 30px; padding: 0 10px 0 4px; background: #576b79; color: #fff; }
.app { width: 28px; height: 30px; padding: 4px; border-top: 2px solid transparent; }
.app.first { margin-right: 2px; }
.running { border-top-color: #99ccf3; }
.active { width: 36px; margin: 0 -4px; padding: 4px 8px; background: #2a6ba3; }
.tray { display: flex; align-items: center; gap: 8px; }
.tray svg { width: 16px; height: 16px; }
.temp { width: 16px; background: #444; color: #ffd400; font-size: 13px; font-weight: 400; text-align: center; }
.lang { margin-left: 1px; }
.clock { margin-left: 4px; }
.clock.end { margin-left: auto; margin-right: -4px; }
.notif { width: 16px; height: 16px; margin: 0 15px 0 8px; }

/* mail window */
.outlook { position: relative; flex: 1; min-height: 0; display: flex; flex-direction: column; background: #fff; }
.ol-title { flex: none; position: relative; display: flex; justify-content: space-between; align-items: flex-start; height: 64px; padding: 8px 18px 0 0; background: #106ebe; color: #fff; font-size: 11px; }
.circuit { position: absolute; right: 0; top: 0; width: 500px; height: 64px; }
.ol-name { width: 1112px; text-align: right; }
.win-ctl { position: relative; display: flex; align-items: center; gap: 34px; height: 14px; }
.ribbon { flex: none; display: flex; height: 93px; padding: 4px 8px 3px 0; background: #f3f3f3; border-bottom: 1px solid #c8c8c8; color: #333; }
.rg { display: flex; flex-direction: column; border-right: 1px solid #c0c0c0; width: 162px; }
.rg.gallery { flex-direction: row; justify-content: flex-end; align-items: flex-start; width: 1065px; padding: 2px 3px 0 0; }
.gal-box { display: flex; height: 61px; border: 1px solid #c6c6c6; background: #fff; }
.gal-list { display: flex; flex-direction: column; gap: 4px; padding: 2px 0 0 32px; width: 130px; color: #555; white-space: nowrap; }
.gal-btns { display: flex; flex-direction: column; }
.gal-btns svg { flex: 1; width: 14px; height: 19px; padding: 4px; color: #bbb; background: #f0f0f0; border-left: 1px solid #c6c6c6; border-bottom: 1px solid #c6c6c6; }
.gal-btns .on { color: #555; background: #fff; }
.launch { align-self: flex-end; margin: 0 0 2px 2px; }
.rg:nth-child(4) { width: 150px; }
.rg:nth-child(5) { width: 88px; }
.rg:nth-child(6) { width: 102px; }
.rg-items { flex: 1; display: flex; justify-content: center; gap: 8px; }
.rb { display: flex; flex-direction: column; align-items: center; line-height: 16px; padding-top: 1px; white-space: nowrap; }
.rb > span { padding-top: 4px; }
.tri { width: 6px; height: 6px; margin-top: 6px; color: #666; }
.tri-in { width: 6px; height: 6px; vertical-align: middle; color: #555; }
.rg-label { text-align: center; white-space: nowrap; }
.rg.find { padding: 0 8px; align-items: stretch; }
.rg.find .rg-label { margin-top: auto; }
.find-in { width: 100%; height: 21px; padding: 0 3px; border: 1px solid #888; background: #fff; }
.find-row { display: flex; align-items: center; gap: 4px; height: 23px; padding-left: 2px; white-space: nowrap; }
.collapse { margin: auto 0 2px auto; }

.ol-body { flex: 1; min-height: 0; display: flex; }
.folders { flex: none; width: 231px; display: flex; flex-direction: column; justify-content: flex-end; background: #f3f3f3; border-right: 1px solid #dcdcdc; color: #444; }
.tree-list { padding: 0 4px 7px 22px; }
.tree-list li { position: relative; height: 24px; line-height: 24px; white-space: nowrap; }
.tree-list .acct { margin-top: 24px; font-size: 15px; color: #333; }
.tree-list b { margin-left: 4px; color: #2067b0; }
.tree-list i { color: #2067b0; }
.tw { position: absolute; left: -11px; top: 8px; width: 8px; height: 8px; }
.modules { flex: none; display: flex; align-items: center; height: 43px; border-top: 1px solid #ccc; background: linear-gradient(90deg, #dadada 42px, #e6e6e6 42px); }
.modules button { width: 42px; text-align: center; }
.modules svg { vertical-align: middle; }
.mail-col { flex: none; display: flex; width: 315px; border-right: 1px solid #ccc; overflow: hidden; padding-left: 9px; }
.mails { width: 276px; margin-right: 8px; padding-top: 356px; }
.mail { height: 62px; padding: 5px 25px 0 27px; border-bottom: 1px solid #dcdcdc; background: #fff; }
.mail.unread { background: linear-gradient(#0a5ea8, #0a5ea8) 2px 2px / 3px 57px no-repeat; }
.mail h3 { font-size: 14px; line-height: 20px; color: #333; }
.unread h3 { color: #111; }
.subj { display: flex; justify-content: space-between; line-height: 14px; white-space: nowrap; color: #222; }
.unread .subj { color: #0a5ea8; font-weight: 700; }
.prev { line-height: 15px; color: #777; }
.prev.indent { padding-left: 97px; }
.day { height: 25px; padding-left: 14px; background: #efefef; font-size: 11px; line-height: 24px; font-weight: 600; color: #444; }
.day svg { margin-right: 5px; }

.sb { flex: none; display: flex; flex-direction: column; align-items: center; width: 16px; background: #f0f0f0; color: #555; }
.sb > svg { width: 10px; height: 10px; margin: 4px 0; }
.thumb { width: 100%; background: #cdcdcd; }
.sb.light { width: 15px; justify-content: flex-end; }
.sb > .sb-btn { flex: none; width: 15px; height: 15px; margin: 0; padding: 3px; border: 1px solid #aaa; background: #fff; color: #666; }
.mail-col .sb { padding-bottom: 2px; }
.reading { flex: 1; min-width: 0; display: flex; flex-direction: column; padding: 0 8px 8px 21px; }
.read-head { flex: none; position: relative; display: flex; align-items: center; height: 113px; padding-bottom: 22px; border-bottom: 1px solid #ddd; color: #666; }
.from { width: 573px; text-align: right; font-size: 14px; }
.to { display: flex; align-items: center; gap: 5px; height: 21px; margin-left: 20px; padding-left: 20px; border-left: 1px solid #ccc; }
.read-head time { margin-left: auto; }
.more { position: absolute; right: 2px; bottom: 8px; }
.read-body { flex: 1; min-height: 0; display: flex; margin-top: 9px; gap: 12px; }
.msg { flex: 1; min-width: 0; overflow: hidden; font: 14px/19px Lato, sans-serif; color: #000; }
.read-sb .thumb { flex: none; width: 15px; height: 483px; margin-bottom: auto; background: #fff; border: 1px solid #aaa; }
.verdict { width: 694px; padding-top: 49px; text-align: right; font: 700 15px/19px "Liberation Sans", sans-serif; }
.sig { margin-top: 185px; color: #1f497d; }
.sig a { color: #00f; }
.sig-mail { display: flex; align-items: center; gap: 10px; margin-top: 20px; }
.sig svg { vertical-align: middle; }
.quote { margin-top: 90px; padding-top: 6px; border-top: 1px solid #ddd; }
.quote a { color: #0563c1; }
.gap { margin-bottom: 19px; }
.status { flex: none; display: flex; align-items: center; height: 22px; padding: 0 8px; gap: 18px; border-top: 1px solid #c6c6c6; background: #f1f1f1; color: #444; white-space: nowrap; }
.status > :first-child { margin-right: 14px; }
.zoombar { display: flex; align-items: center; height: 100%; }
.view { display: flex; align-items: center; justify-content: center; width: 40px; height: 100%; }
.view.on { background: #c9c9c9; }
.zoombar > svg { margin-left: 5px; }
.zoombar > span:last-child { margin-left: 13px; }

/* save dialog */
.dialog { position: absolute; left: 7px; top: 0; width: 947px; height: 533px; display: flex; flex-direction: column; border: 1px solid #0078d7; background: #f0f0f0; box-shadow: 2px 4px 16px rgba(0, 0, 0, .35); color: #111; }
.dl-title { flex: none; display: flex; align-items: center; gap: 5px; height: 30px; padding: 0 10px 0 9px; background: #0078d7; color: #fff; }
.dl-nav { flex: none; display: flex; align-items: center; height: 42px; padding: 0 12px; background: #fff; }
.dl-nav > svg { margin-right: 15px; color: #555; }
.dl-nav > svg:nth-child(3), .dl-nav > svg:nth-child(4) { margin-right: 8px; }
.dl-nav .dim { color: #ccc; }
.path { flex: 1; display: flex; align-items: center; gap: 8px; height: 30px; padding-left: 2px; border: 1px solid #d9d9d9; }
.refresh { display: flex; align-items: center; justify-content: center; width: 33px; height: 28px; margin-left: 2px; border-left: 1px solid #d9d9d9; }
.dl-search { display: flex; align-items: center; gap: 11px; width: 202px; height: 30px; margin-left: 12px; padding-left: 13px; border: 1px solid #d9d9d9; color: #777; overflow: hidden; }
.dl-search input { flex: 1; min-width: 0; border: 0; padding: 0; background: none; }
.dl-search input::placeholder { color: #666; }
.dl-tools { flex: none; display: flex; align-items: center; height: 31px; padding: 0 15px 0 18px; background: #f5f6f7; border-bottom: 1px solid #e5e5e5; color: #1e395b; }
.dl-tools > span + span { margin-left: 34px; }
.dl-tools > .tri-in { margin: 0 30px 0 8px; width: 8px; height: 8px; }
.dl-main { flex: none; display: flex; height: 311px; background: #fff; overflow: hidden; }
.places { flex: none; width: 140px; padding-top: 8px; overflow: hidden; white-space: nowrap; }
.places li { display: flex; align-items: center; gap: 5px; height: 24px; padding-left: 32px; }
.places .top { padding-left: 24px; margin-bottom: 8px; }
.places .top:nth-child(3) { margin-bottom: 0; }
.places .top:last-child { margin-top: 8px; }
.places .sel { background: #d9d9d9; }
.places svg { width: 16px; height: 16px; }
.tree-sb .thumb { height: 158px; margin-top: 102px; }
.file-sb .thumb { height: 162px; }
.file-sb > svg:last-child, .tree-sb > svg:last-child { margin-top: auto; }
.tree-sb > svg, .file-sb > svg { color: #444; }
.files { flex: 1; min-width: 0; padding-left: 17px; }
.files table { table-layout: fixed; width: 680px; border-collapse: collapse; }
.c1 { width: 257px; } .c2 { width: 80px; } .c3 { width: 144px; } .c4 { width: 120px; } .c5 { width: 79px; }
th { position: relative; height: 26px; padding: 0 6px; border-right: 1px solid #e0e0e0; text-align: left; font-weight: 400; color: #4c607a; }
th:first-child { padding-left: 3px; }
.sort { position: absolute; left: 50%; top: 0; width: 8px; height: 6px; }
tbody::before { content: ""; display: block; height: 6px; }
td { height: 21px; padding: 0 6px; line-height: 16px; color: #6d6d6d; white-space: nowrap; }
td:first-child { color: #000; padding-left: 4px; }
td svg { width: 16px; height: 16px; margin-right: 4px; vertical-align: middle; }
.hover { background: #e5f3ff; }
.dl-fields { display: grid; grid-template-columns: 1fr 814px; gap: 2px 6px; padding: 11px 5px 0 0; align-items: center; text-align: right; }
.combo { display: flex; align-items: center; justify-content: space-between; height: 23px; padding: 0 4px; border: 1px solid #adadad; background: #e1e1e1; color: #444; }
.combo.focus { border-color: #0078d7; background: #fff; }
.combo input { width: 94px; height: 16px; border: 0; padding: 0; background: #0078d7; color: #fff; }
.combo select { flex: 1; appearance: none; border: 0; padding: 0; background: none; color: #111; }
.dl-actions { display: flex; align-items: center; margin-top: auto; padding: 0 18px 12px 12px; }
.dl-actions > span { margin-left: 8px; }
.dl-actions > .end { margin-left: auto; }
.dl-actions .tri-in { width: 8px; height: 8px; margin: 0 18px; }
.btn { width: 86px; height: 24px; border: 1px solid #adadad; background: #e1e1e1; }
.btn.primary { width: 94px; margin-right: 14px; border: 2px solid #0078d7; }
.grip { position: absolute; right: 2px; bottom: 2px; width: 9px; height: 9px; }

/* browser */
.tabs { flex: none; display: flex; height: 33px; background: #c7c7c7; border-bottom: 1px solid #8c8c8c; color: #4a4a4a; }
.tab { flex: none; display: flex; align-items: center; gap: 8px; width: 225px; padding: 2px 12px 0 9px; border-right: 1px solid #8c8c8c; }
.tab.active { height: 33px; padding-top: 0; border-top: 2px solid #0a84ff; background: #f9f9fa; }
.tab > .end { width: 11px; height: 11px; color: #333; }
.fav { width: 16px; height: 16px; }
.violet { color: #563d7c; }
.purple { color: #7a12f0; }
.newtab { padding: 0 8px; }
.win-ctl.dark { margin: 10px 18px 0 auto; color: #555; }
.toolbar { flex: none; display: flex; align-items: center; height: 42px; padding: 0 11px 0 3px; background: #f9f9fa; color: #4a4a4a; }
.toolbar svg { width: 16px; height: 16px; }
.toolbar > svg { margin-left: 16px; }
.toolbar > .dim { margin-left: 9px; color: #aaa; }
.back { display: flex; align-items: center; justify-content: center; width: 34px; height: 34px; border: 1px solid #aaa; border-radius: 50%; background: #fff; }
.url { flex: 1; display: flex; align-items: center; height: 30px; gap: 12px; margin-left: 125px; padding: 0 7px; border: 1px solid #bbb; border-radius: 2px; background: #fff; }
.url > svg:nth-of-type(2) { margin-right: -9px; }
.vsep { width: 1px; height: 22px; margin: 0 -5px; background: #ddd; }
.addr { font-size: 13px; color: #888; margin-left: -4px; }
.addr b { font-weight: 400; color: #111; }
.exts { display: flex; align-items: center; gap: 16px; margin-left: 125px; }
.tall { height: 34px; margin: 0 -6px; }
.marks { flex: none; display: flex; align-items: center; gap: 15px; height: 27px; padding: 0 12px; background: #f9f9fa; border-bottom: 1px solid #ccc; white-space: nowrap; }
.marks a { display: flex; align-items: center; gap: 4px; color: #111; text-decoration: none; }
.marks svg { width: 16px; height: 16px; }

/* contact page */
.page { flex: 1; min-height: 0; display: flex; flex-direction: column; background: #4e4e4e; font: 15px/24px "Open Sans", "Noto Sans", sans-serif; color: #212529; }
.site-nav { display: flex; align-items: center; justify-content: center; gap: 27px; height: 56px; padding: 2px 84px 0 0; color: #fff; }
.site-nav a { color: #fff; text-decoration: none; }
.site-nav .current { color: #17a2d8; }
.site-nav input { width: 121px; height: 31px; margin-left: 20px; padding: 0 8px; border: 0; border-radius: 4px; background: #6c6c6c; font-size: 13px; }
.site-nav input::placeholder { color: #59626b; }
.site-nav button { display: flex; margin-left: -14px; }
.contact { width: 417px; margin-left: 390px; }
.contact > label { display: block; margin-bottom: 8px; }
.contact > input, .pick { display: block; width: 100%; height: 38px; margin-bottom: 16px; padding: 0 12px; border: 1px solid #ced4da; border-radius: 4px; background: #fff; color: #333; }
.contact > input::placeholder { color: #6c757d; }
.contact > .filled { background: #fff6c4; border-color: #e0cf95; }
.contact > .secret { font-size: 26px; }
.contact > .bad { margin-bottom: 4px; border-color: #e6b69a; box-shadow: 0 0 2px 1px #d2201c; }
.pick { display: flex; padding: 0; }
.pick select { flex: 1; appearance: none; border: 0; padding: 0 16px; background: none; }
.pick span { display: flex; align-items: center; width: 17px; padding-left: 2px; border: 1px solid #aaa; background: #e1e1e1; }
.contact small { display: block; margin-bottom: 16px; font-size: 12px; line-height: 19px; color: #6c757d; }
.contact h4 { margin-bottom: 8px; font-size: 23px; line-height: 29px; }
.checks { display: flex; justify-content: space-between; white-space: nowrap; }
.checks label { display: flex; align-items: center; }
.checks input { width: 13px; height: 13px; margin: 0 7px 4px 0; }
.contact > button { margin-top: 48px; width: 76px; height: 38px; border-radius: 4px; background: #007bff; color: #fff; }
.weather { position: relative; margin-top: auto; height: 113px; padding-top: 12px; background: #000; color: #fff; }
.dome { position: absolute; left: calc(50% - 50px); top: -50px; width: 100px; height: 50px; border-radius: 50px 50px 0 0; background: #000; }
.weather p { display: flex; justify-content: center; gap: 9px; padding-right: 32px; }
```
